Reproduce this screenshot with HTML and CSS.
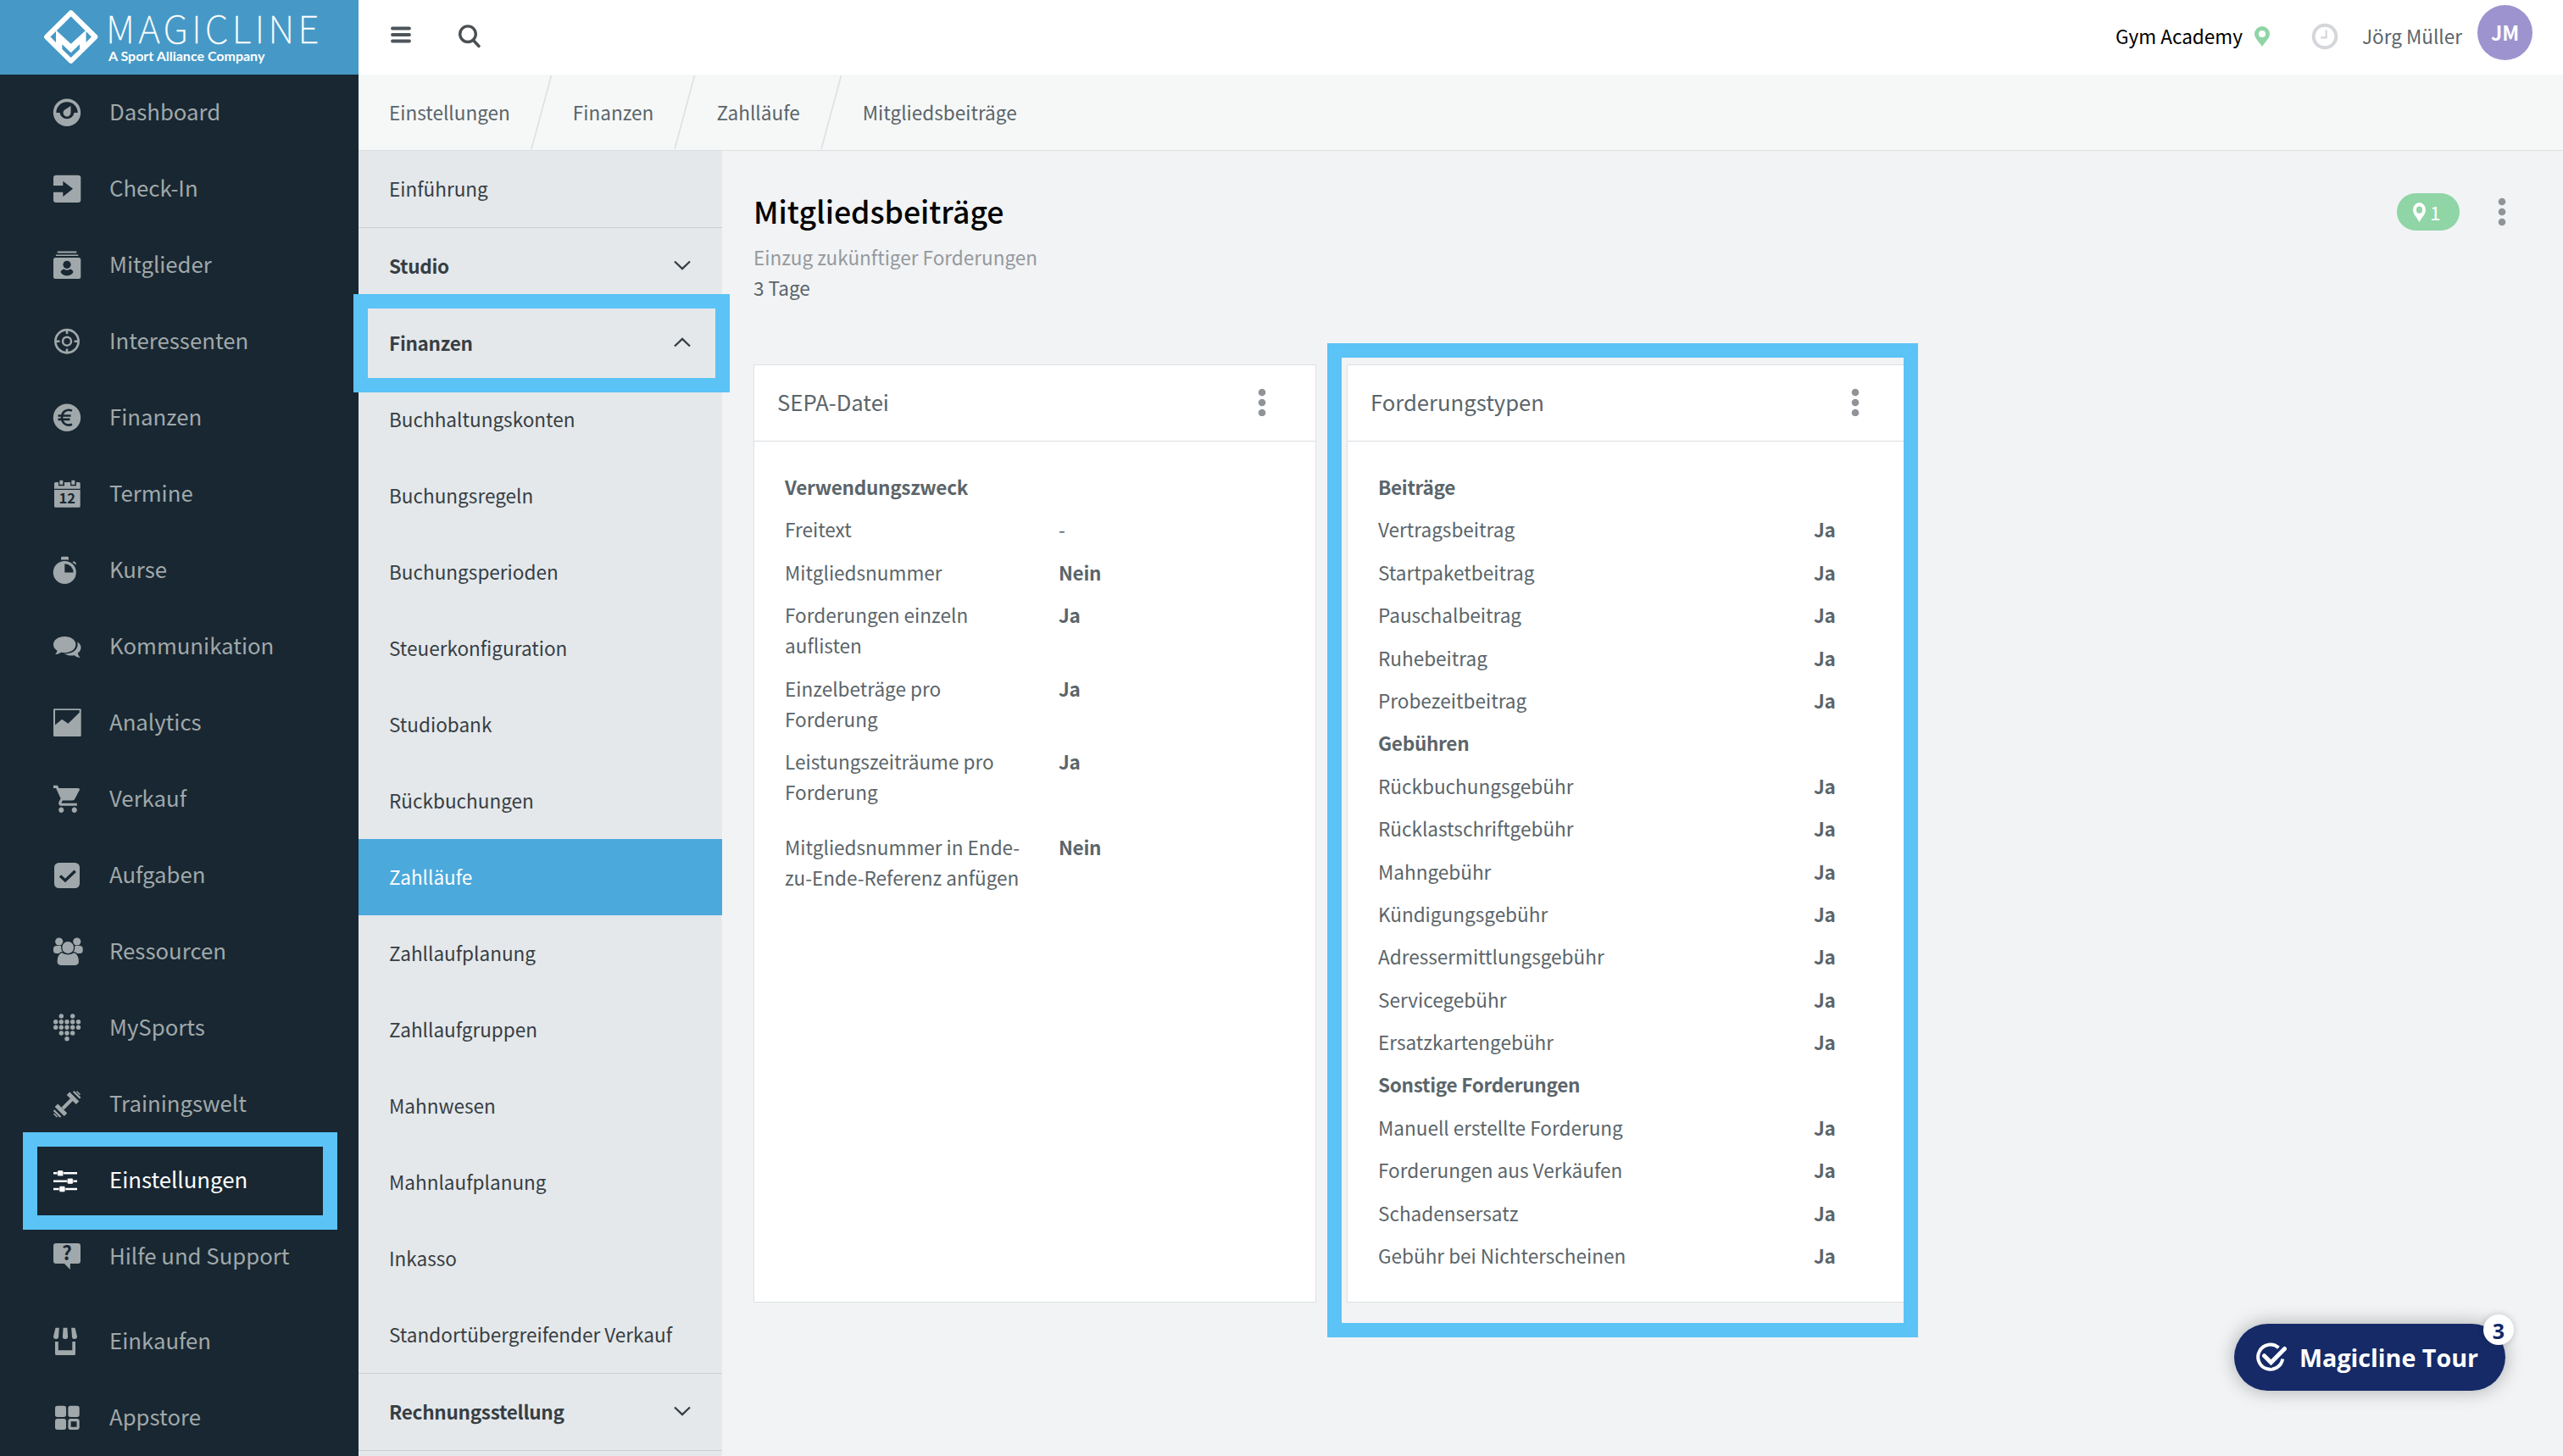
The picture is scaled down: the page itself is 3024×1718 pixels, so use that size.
FILE: index.html
```html
<!DOCTYPE html>
<html lang="de">
<head>
<meta charset="utf-8">
<title>Mitgliedsbeiträge</title>
<link rel="stylesheet" href="styles.css">
</head>
<body>
<div class="app">
  <aside class="sidebar">
    <div class="brand">
      <svg class="brand-mark" width="68" height="72" viewBox="0 0 68 72"><path d="M33.7 7.2 62.3 35.5 33.7 63.8 5.1 35.5z" fill="none" stroke="#fff" stroke-width="6" stroke-linejoin="round"/><path d="M16 27.5 33.7 43.7 51.5 27.5V46L33.7 63 16 46z" fill="#fff"/><path d="M23.3 44.3 33.7 54.3 44 44.3V50L33.7 60 23.3 50z" fill="#4699c6"/></svg>
      <div class="brand-text"><div class="brand-name">MAGICLINE</div><div class="brand-sub">A Sport Alliance Company</div></div>
    </div>
    <nav class="nav">
      <a class="nav-item"><svg class="ico" viewBox="0 0 36 36"><circle cx="17" cy="17.7" r="16.2"/><path class="cut" d="M4.3 18a12.6 12.6 0 0 1 25.4 0h-4.2a8.6 8.6 0 0 1-17 0z"/><path d="M21.5 10v8a4.5 4.5 0 1 1-7.8-3z"/></svg><span>Dashboard</span></a>
      <a class="nav-item"><svg class="ico" viewBox="0 0 36 36"><rect x="1" y="1.7" width="32.3" height="32.3" rx="3.2"/><path class="cut" d="M0 14h12.3V8.7L24 17.8 12.3 27v-5.3H0z"/></svg><span>Check-In</span></a>
      <a class="nav-item"><svg class="ico" viewBox="0 0 36 36"><path d="M5.7 1.6h22.6v1.9H5.7zM3.9 5.4h26.4v1.7H3.9z"/><rect x="1" y="9" width="32.3" height="25" rx="2.5"/><circle class="cut" cx="17" cy="17.3" r="4.6"/><path class="cut" d="M13.6 22.5c2 1.6 5 1.6 7 0 2.3.6 3.8 2 3.8 3.5-1.5 3.3-4.5 4.2-7.4 4.2s-5.900-.9-7.400-4.200c0-1.500 1.700-2.900 4-3.500z"/></svg><span>Mitglieder</span></a>
      <a class="nav-item"><svg class="ico line" viewBox="0 0 36 36"><circle cx="17" cy="17.7" r="13.6" stroke-width="2.7"/><circle cx="17" cy="17.7" r="5" stroke-width="2.5"/><path d="M17 4v5M17 26.500v5M3.500 17.700h5M25.500 17.700h5" stroke-width="2.6"/></svg><span>Interessenten</span></a>
      <a class="nav-item"><svg class="ico" viewBox="0 0 36 36"><circle cx="17" cy="17.7" r="16.2"/><path class="cutline" d="M23 9.6c-6.500-2.600-12 1.300-12 8.100s5.500 10.700 12 8.100M6.500 15.500H21.500M6.500 19.900H20.500" stroke-width="2.6"/></svg><span>Finanzen</span></a>
      <a class="nav-item"><svg class="ico" viewBox="0 0 36 36"><path d="M3.500 4H7v4.300h7V4h7v4.300h7V4h3.200q1.500 0 1.500 1.500v6.200H2V5.500Q2 4 3.500 4zM8.300 2.500q0-.8.800-.8h2.500q.8 0 .8.800v4.300H8.300zM22.300 2.500q0-.8.800-.8h2.500q.8 0 .8.800v4.300h-4.100zM2 13h30.700v19.200q0 1.500-1.500 1.500H3.500Q2 33.700 2 32.200z"/><text class="cut" x="17.200" y="29" font-size="16.500" font-weight="700" text-anchor="middle">12</text></svg><span>Termine</span></a>
      <a class="nav-item"><svg class="ico" viewBox="0 0 36 36"><circle cx="14.3" cy="20.4" r="13.5"/><path class="cut" d="M14.300 10.200a10.300 10.300 0 0 1 10.300 10.200H14.300z"/><path d="M10 5.500V3.200q0-1.500 1.500-1.500h6q1.500 0 1.500 1.500v2.300zM23.500 8.500l1.600-1.500 2.700 2.400v2.200z"/></svg><span>Kurse</span></a>
      <a class="nav-item"><svg class="ico" viewBox="0 0 36 36"><path d="M14.200 6C7 6 1 10 1 15.500c0 3 1.700 5.500 4.500 7.200-.3 1.700-1 3-2.300 4.300 2.700 0 4.800-.8 6.600-2.300 1.400.3 2.900.5 4.400.5 7.300 0 13.200-4.200 13.200-9.700S21.500 6 14.200 6z"/><path d="M29.200 12.500c2.600 1.500 4.300 3.800 4.300 6.400 0 2.700-1.400 4.900-3.700 6.500.4 2.200 1.200 3.800 3 5.500-2.900-.1-4.900-.8-6.900-2.600-4.700.8-9.200-.2-12-1.800 8.800.2 15.600-4.300 15.800-11z"/></svg><span>Kommunikation</span></a>
      <a class="nav-item"><svg class="ico" viewBox="0 0 36 36"><rect x="1" y="1.2" width="32.7" height="32.7" rx="1.2"/><path class="cut" d="M3 3h28.700v2.800L18.400 18.700l-7.300-5L3 20.500z"/></svg><span>Analytics</span></a>
      <a class="nav-item"><svg class="ico" viewBox="0 0 36 36"><path transform="translate(-.6 -1.500) scale(1.550 1.610)" d="M7 18c-1.100 0-1.990.9-1.990 2S5.900 22 7 22s2-.9 2-2-.9-2-2-2zM1 2v2h2l3.600 7.590-1.350 2.450c-.16.280-.25.610-.25.960 0 1.100.9 2 2 2h12v-2H7.420c-.14 0-.25-.11-.25-.25l.03-.12.9-1.630h7.450c.75 0 1.410-.41 1.750-1.030l3.580-6.490c.08-.14.12-.31.12-.48 0-.55-.45-1-1-1H5.210l-.94-2H1zm16 16c-1.100 0-1.990.9-1.990 2s.89 2 1.990 2 2-.9 2-2-.9-2-2-2z"/></svg><span>Verkauf</span></a>
      <a class="nav-item"><svg class="ico" viewBox="0 0 36 36"><rect x="2" y="3" width="30" height="30" rx="5.500"/><path class="cutline" d="M9 18.500 15 24 26.700 12.800" stroke-width="3.400"/></svg><span>Aufgaben</span></a>
      <a class="nav-item"><svg class="ico" viewBox="0 0 36 36"><circle cx="7.700" cy="6" r="4.600"/><circle cx="28.800" cy="6" r="4.600"/><rect x="1" y="11" width="12" height="9" rx="3.500"/><rect x="23.500" y="11" width="12.200" height="9" rx="3.500"/><circle class="cut" cx="18.200" cy="13" r="8.200"/><circle cx="18.200" cy="13" r="6.900"/><path stroke="#182731" stroke-width="1.200" d="M10.500 18.600q7.700 4.500 15.400 0 5.600 2.500 5.600 10.900 0 5-5 5H10q-5 0-5-5 0-8.400 5.500-10.900z"/></svg><span>Ressourcen</span></a>
      <a class="nav-item"><svg class="ico" viewBox="0 0 36 36"><g class="dots"><path d="M10.300 4h0M23.700 4h0M3.700 10.700h0M10.300 10.700h0M17 10.700h0M23.700 10.700h0M30.500 10.700h0M3.700 17.300h0M10.300 17.300h0M17 17.300h0M23.700 17.300h0M30.500 17.300h0M10.300 24h0M17 24h0M23.700 24h0M17 30.700h0"/></g></svg><span>MySports</span></a>
      <a class="nav-item"><svg class="ico line" viewBox="0 0 36 36"><path d="M12 23 23 12" stroke-width="4"/><path d="M18.500 5.300 29.500 16.300M4.500 19.300 15.500 30.300" stroke-width="5"/><path d="M24.700 2.800l8 8M1.500 25l8 8" stroke-width="2.200"/><path d="M28.500 2.800l4 4M1.500 29l4 4" stroke-width="1.600"/></svg><span>Trainingswelt</span></a>
      <a class="nav-item current"><svg class="ico" viewBox="0 0 36 36"><path d="M1 8h28v2.600H1zM1 17.400h28V20H1zM1 26.700h28v2.600H1z"/><g class="knobs"><rect x="5.700" y="5.900" width="7" height="6.800" rx="1.500"/><rect x="17.300" y="15.300" width="7" height="6.800" rx="1.500"/><rect x="7.900" y="24.600" width="7" height="6.800" rx="1.500"/></g></svg><span>Einstellungen</span><i class="marker marker-nav"></i></a>
      <a class="nav-item"><svg class="ico" viewBox="0 0 36 36"><path d="M4 2h26q3 0 3 3v18q0 3-3 3h-9.200v7L14 26H4q-3 0-3-3V5q0-3 3-3z"/><text class="cut" x="17" y="22.300" font-size="23" font-weight="700" text-anchor="middle">?</text></svg><span>Hilfe und Support</span></a>
      <a class="nav-item apart"><svg class="ico" viewBox="0 0 36 36"><path d="M3.500 1.700h4.300L7 13q-.3 2-2.800 2Q1 15 1 12zM12.600 1.700h4.800l.7 10.800q0 2.500-3.100 2.500t-3.100-2.500zM22.200 1.700h4.300L29 12q0 3-3.200 3-2.500 0-2.800-2zM3 18h3.800v10.200h16.500V18H27v14.500q0 1.500-1.500 1.500h-21Q3 34 3 32.500z"/></svg><span>Einkaufen</span></a>
      <a class="nav-item"><svg class="ico" viewBox="0 0 36 36"><rect x="3" y="3.700" width="13" height="13.300" rx="2.700"/><rect x="18.400" y="3.700" width="13.300" height="13.300" rx="2.700"/><rect x="3" y="19" width="13" height="13" rx="2.700"/><rect x="20" y="20.600" width="10.100" height="9.800" rx="1.300" fill="none" stroke="#a0a8ab" stroke-width="3.200"/></svg><span>Appstore</span></a>
    </nav>
  </aside>

  <div class="page">
    <header class="topbar">
      <svg width="24" height="20" viewBox="0 0 24 20" class="burger"><path d="M2 2.500h20M2 10h20M2 17.500h20"/></svg>
      <svg width="30" height="30" viewBox="0 0 30 30" class="search"><circle cx="12" cy="12.200" r="9.300"/><path d="M18.500 19.500l6.500 7"/></svg>
      <span class="studio">Gym Academy</span>
      <svg class="pin" width="18" height="24" viewBox="0 0 18 24"><path fill-rule="evenodd" d="M9 0a9 9 0 0 1 9 9c0 5-5.500 9.500-9 15C5.500 18.500 0 14 0 9a9 9 0 0 1 9-9zm0 4.900a4.100 4.100 0 1 0 0 8.200 4.100 4.100 0 0 0 0-8.200z"/></svg>
      <svg class="clock" width="32" height="32" viewBox="0 0 32 32"><circle cx="16" cy="16" r="13.300" stroke-width="4"/><path d="M17.600 8.500v8.800h-6.500" stroke-width="2.200"/></svg>
      <span class="user">Jörg Müller</span>
      <span class="avatar">JM</span>
    </header>
    <nav class="crumbs">
      <span>Einstellungen</span>
      <svg width="26" height="87" viewBox="0 0 26 87"><path d="M24.500 0 1 87"/></svg>
      <span>Finanzen</span>
      <svg width="26" height="87" viewBox="0 0 26 87"><path d="M24.500 0 1 87"/></svg>
      <span>Zahlläufe</span>
      <svg width="26" height="87" viewBox="0 0 26 87"><path d="M24.500 0 1 87"/></svg>
      <span>Mitgliedsbeiträge</span>
    </nav>
    <div class="columns">
      <nav class="subnav">
        <a class="sub top">Einführung</a>
        <a class="sub top group">Studio<svg width="22" height="14" viewBox="0 0 22 14"><path d="M2 2.500l9 8.700 9-8.700"/></svg></a>
        <a class="sub group">Finanzen<svg width="22" height="14" viewBox="0 0 22 14"><path d="M2 11.500l9-8.700 9 8.700"/></svg><i class="marker marker-sub"></i></a>
        <a class="sub">Buchhaltungskonten</a>
        <a class="sub">Buchungsregeln</a>
        <a class="sub">Buchungsperioden</a>
        <a class="sub">Steuerkonfiguration</a>
        <a class="sub">Studiobank</a>
        <a class="sub">Rückbuchungen</a>
        <a class="sub active">Zahlläufe</a>
        <a class="sub">Zahllaufplanung</a>
        <a class="sub">Zahllaufgruppen</a>
        <a class="sub">Mahnwesen</a>
        <a class="sub">Mahnlaufplanung</a>
        <a class="sub">Inkasso</a>
        <a class="sub top">Standortübergreifender Verkauf</a>
        <a class="sub top group">Rechnungsstellung<svg width="22" height="14" viewBox="0 0 22 14"><path d="M2 2.500l9 8.700 9-8.700"/></svg></a>
      </nav>
      <main class="content">
        <div class="head">
          <div class="head-text">
            <h1>Mitgliedsbeiträge</h1>
            <p class="hint">Einzug zukünftiger Forderungen</p>
            <p class="value">3 Tage</p>
          </div>
          <span class="pill"><svg width="15" height="23" viewBox="0 0 18 24" preserveAspectRatio="none"><path fill-rule="evenodd" d="M9 0a9 9 0 0 1 9 9c0 5-5.500 9.500-9 15C5.500 18.500 0 14 0 9a9 9 0 0 1 9-9zm0 4.700a4.300 4.300 0 1 0 0 8.600 4.300 4.300 0 0 0 0-8.600z"/></svg>1</span>
          <svg class="more" width="10" height="34" viewBox="0 0 10 34"><circle cx="5" cy="5" r="4.300"/><circle cx="5" cy="17" r="4.300"/><circle cx="5" cy="29" r="4.300"/></svg>
        </div>
        <div class="cards">
          <section class="card">
            <h2>SEPA-Datei<svg class="more" width="10" height="34" viewBox="0 0 10 34"><circle cx="5" cy="6" r="4.300"/><circle cx="5" cy="18" r="4.300"/><circle cx="5" cy="30" r="4.300"/></svg></h2>
            <dl class="rows narrow">
              <div class="title">Verwendungszweck</div>
              <div><dt>Freitext</dt><dd class="plain">-</dd></div>
              <div><dt>Mitgliedsnummer</dt><dd>Nein</dd></div>
              <div><dt>Forderungen einzeln auflisten</dt><dd>Ja</dd></div>
              <div><dt>Einzelbeträge pro Forderung</dt><dd>Ja</dd></div>
              <div><dt>Leistungszeiträume pro Forderung</dt><dd>Ja</dd></div>
              <div class="spaced"><dt>Mitgliedsnummer in Ende-zu-Ende-Referenz anfügen</dt><dd>Nein</dd></div>
            </dl>
          </section>
          <section class="card">
            <h2>Forderungstypen<svg class="more" width="10" height="34" viewBox="0 0 10 34"><circle cx="5" cy="6" r="4.300"/><circle cx="5" cy="18" r="4.300"/><circle cx="5" cy="30" r="4.300"/></svg></h2>
            <dl class="rows wide">
              <div class="title">Beiträge</div>
              <div><dt>Vertragsbeitrag</dt><dd>Ja</dd></div>
              <div><dt>Startpaketbeitrag</dt><dd>Ja</dd></div>
              <div><dt>Pauschalbeitrag</dt><dd>Ja</dd></div>
              <div><dt>Ruhebeitrag</dt><dd>Ja</dd></div>
              <div><dt>Probezeitbeitrag</dt><dd>Ja</dd></div>
              <div class="title">Gebühren</div>
              <div><dt>Rückbuchungsgebühr</dt><dd>Ja</dd></div>
              <div><dt>Rücklastschriftgebühr</dt><dd>Ja</dd></div>
              <div><dt>Mahngebühr</dt><dd>Ja</dd></div>
              <div><dt>Kündigungsgebühr</dt><dd>Ja</dd></div>
              <div><dt>Adressermittlungsgebühr</dt><dd>Ja</dd></div>
              <div><dt>Servicegebühr</dt><dd>Ja</dd></div>
              <div><dt>Ersatzkartengebühr</dt><dd>Ja</dd></div>
              <div class="title">Sonstige Forderungen</div>
              <div><dt>Manuell erstellte Forderung</dt><dd>Ja</dd></div>
              <div><dt>Forderungen aus Verkäufen</dt><dd>Ja</dd></div>
              <div><dt>Schadensersatz</dt><dd>Ja</dd></div>
              <div><dt>Gebühr bei Nichterscheinen</dt><dd>Ja</dd></div>
            </dl>
            <i class="marker marker-card"></i>
          </section>
        </div>
      </main>
    </div>
  </div>
</div>
<div class="tour">
  <svg width="38" height="36" viewBox="0 0 38 36"><path d="M27.500 6.300A14.600 14.600 0 1 0 32.200 19.500" fill="none" stroke="#fff" stroke-width="4"/><path d="M11 16.500l7.500 7.500L34 8" fill="none" stroke="#152a67" stroke-width="9"/><path d="M10.500 15.700l8 8L34.500 7.500" fill="none" stroke="#fff" stroke-width="5" stroke-linecap="round"/></svg>
  <span>Magicline Tour</span>
  <b class="tour-count">3</b>
</div>
</body>
</html>
```
FILE: styles.css
```css
* { box-sizing: border-box; }
body { margin: 0; width: 3024px; height: 1718px; overflow: hidden; background: #f1f3f5; color: #5b656a; font: 400 22.55px/36px "Noto Sans CJK SC", "Open Sans", sans-serif; }
h1, h2, p, dl, dd { margin: 0; }
svg { flex: none; }
.app { display: flex; height: 1718px; }

.sidebar { width: 423px; flex: none; background: #182731; }
.brand { height: 88px; padding: 8px 0 0 50px; display: flex; background: #4699c6; color: #fff; }
.brand-text { padding: 2px 0 0 6px; }
.brand-name { font-size: 44px; font-weight: 100; line-height: 44px; height: 45px; letter-spacing: 4.5px; margin-left: 1px; -webkit-text-stroke: .4px #fff; }
.brand-sub { font: 700 16px/22px Lato, sans-serif; margin-left: 4px; }
.nav { display: flex; flex-direction: column; }
.nav-item { position: relative; height: 90px; flex: none; display: flex; align-items: center; gap: 31px; padding-left: 62px; color: #a0a8ab; font-size: 25.75px; }
.nav-item span { padding-bottom: 4px; }
.nav-item.apart { margin-top: 10px; }
.nav-item.current { color: #fff; }
.ico { width: 36px; height: 36px; fill: currentColor; overflow: visible; }
.ico.line { fill: none; stroke: currentColor; }
.ico .cut { fill: #182731; }
.ico .cutline { fill: none; stroke: #182731; }
.dots path { stroke: currentColor; stroke-width: 5.4; stroke-linecap: round; }
.knobs rect { stroke: #182731; stroke-width: .5; }

.marker { position: absolute; border: 17px solid #5bc3f6; z-index: 5; }
.marker-nav { left: 27px; top: -12px; width: 371px; height: 115px; }
.marker-sub { left: -6px; top: -13px; width: 444px; height: 116px; }
.marker-card { left: -24px; top: -26px; width: 697px; height: 1173px; }

.page { flex: 1; display: flex; flex-direction: column; }
.topbar { height: 88px; flex: none; background: #fff; display: flex; align-items: flex-start; padding: 0 36px 0 38px; }
.burger { margin-top: 31px; stroke: #4d555a; stroke-width: 3.8; stroke-linecap: round; }
.search { margin: 28px 0 0 55px; fill: none; stroke: #4a4f53; stroke-width: 3.4; stroke-linecap: round; }
.studio { margin: 24px 14px 0 auto; color: #000; }
.pin { margin-top: 31px; fill: #8fd5a6; }
.clock { margin: 27px 28px 0 49px; fill: none; stroke: #d4d6da; }
.user { margin: 24px 18px 0 0; }
.avatar { width: 65px; height: 65px; margin-top: 6px; border-radius: 50%; background: #9d93cf; color: #fff; font-size: 23.4px; font-weight: 700; line-height: 65px; text-align: center; }

.crumbs { height: 90px; flex: none; display: flex; align-items: center; padding-left: 36px; background: #f6f8f8; border-bottom: 1px solid #dadfe2; }
.crumbs span { padding-bottom: 2px; }
.crumbs svg { margin: 0 24px; fill: none; stroke: #dfe2e5; stroke-width: 1.8; }

.columns { flex: 1; display: flex; min-height: 0; }
.subnav { width: 429px; flex: none; background: #e4e8eb; border-right: 1px solid #e9ecee; }
.sub { position: relative; width: 429px; height: 90px; padding: 0 36px 2px; display: flex; align-items: center; justify-content: space-between; color: #373e43; }
.sub.top { height: 91px; border-bottom: 1px solid #cbd1d5; }
.sub.group { font-weight: 700; letter-spacing: -.3px; }
.sub svg { fill: none; stroke: #373e43; stroke-width: 2.3; }
.sub.active { background: #4ba9dc; color: #fff; }

.content { flex: 1; padding: 47px 36px 0 37px; }
.head { display: flex; align-items: flex-start; height: 205px; }
.head-text { flex: 1; }
h1 { font-size: 35.6px; font-weight: 500; line-height: 48px; color: #000; height: 60px; }
.hint { color: #96999d; }
.pill { width: 74px; height: 44px; margin-top: 3px; border-radius: 22px; background: #8fd5a6; color: #fff; display: flex; align-items: center; padding: 0 0 0 19px; gap: 5px; }
.pill svg { fill: #fff; }
.more { fill: #909498; }
.head .more { margin: 8px 31px 0 45px; }

.cards { display: flex; gap: 36px; }
.card { position: relative; width: 664px; height: 1107px; background: #fff; border: 1px solid #dde1e3; }
h2 { height: 90px; padding: 0 58px 4px 27px; display: flex; align-items: center; justify-content: space-between; font-size: 25.65px; font-weight: 400; border-bottom: 1px solid #dadee0; }
.rows { padding: 35px 36px 0 36px; display: flex; flex-direction: column; gap: 14.4px; }
.rows > div { display: grid; min-height: 36px; }
.narrow > div { grid-template-columns: 285px 1fr; column-gap: 38px; }
.wide > div { grid-template-columns: 490px 1fr; column-gap: 24px; }
.rows > .title { display: block; }
.title, dd { font-weight: 700; letter-spacing: -.3px; }
dd.plain { font-weight: 400; }
.rows .spaced { margin-top: 14.4px; }

.tour { position: absolute; left: 2636px; top: 1562px; width: 320px; height: 79px; border-radius: 40px; background: #152a67; color: #fff; display: flex; align-items: center; gap: 14px; padding-left: 25px; font: 700 28.7px/40px "Open Sans", sans-serif; box-shadow: 0 0 22px rgba(0, 0, 0, .3); }
.tour-count { position: absolute; right: -10px; top: -11px; width: 36px; height: 36px; border-radius: 50%; background: #fff; color: #152a67; font: 700 25px/38px "Open Sans", sans-serif; text-align: center; box-shadow: 0 0 8px rgba(0, 0, 0, .2); }
```
